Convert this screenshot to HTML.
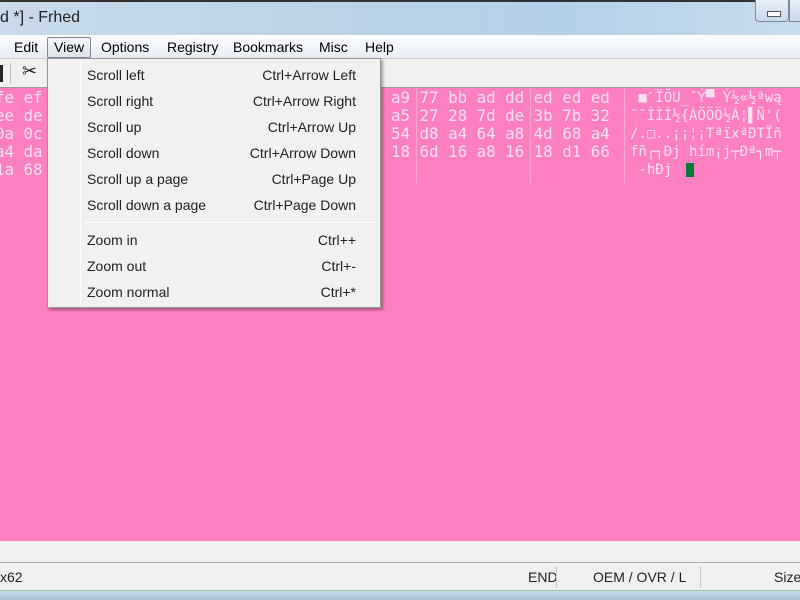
<!DOCTYPE html>
<html><head><meta charset="utf-8"><style>
*{margin:0;padding:0;box-sizing:border-box}
body{width:800px;height:600px;overflow:hidden;position:relative;background:#ff80c0;font-family:"Liberation Sans","DejaVu Sans",sans-serif}
.abs{position:absolute}
#title{left:0;top:0;width:800px;height:35px;background:linear-gradient(90deg,#c9dbea,#bcd3e6 40%,#b4d0e8 70%,#c8dcec);border-top:2px solid #333;}
#title span{position:absolute;left:0;top:7px;font-size:16px;color:#222}
#minb{left:755px;top:0;width:34px;height:22px;border:1px solid #7a8a9a;border-top:none;border-radius:0 0 4px 4px;background:linear-gradient(#e8f0f8,#c8d8e8)}
#minb:after{content:"";position:absolute;left:11px;top:11px;width:12px;height:4px;border:1px solid #555;background:#fff}
#maxb{left:789px;top:0;width:20px;height:22px;border:1px solid #7a8a9a;border-top:none;background:linear-gradient(#e8f0f8,#c8d8e8)}
#menu{left:0;top:35px;width:800px;height:24px;background:linear-gradient(#fbfcfe,#e8edf5);border-bottom:1px solid #c8ccd4}
#view{left:47px;top:37px;width:44px;height:21px;border:1px solid #7e8a98;border-radius:2px;background:linear-gradient(#f4f6f9,#dfe4ea)}
#tool{left:0;top:59px;width:800px;height:29px;background:#f0f0ee;border-bottom:1px solid #999}
.vl{position:absolute;top:88px;height:95px;width:1px;background:#f0a8cc}
.hex{position:absolute;font-family:"DejaVu Sans Mono","Liberation Mono",monospace;font-size:15.8px;color:#fbe0f0;line-height:18px;white-space:pre;top:89px}
#dd{left:47px;top:58px;width:334px;height:250px;background:#f1f1f1;border:1px solid #979797;box-shadow:2px 2px 3px rgba(0,0,0,.35)}
#dd .g{position:absolute;left:32px;top:2px;width:1px;height:244px;background:#e2e3e3;border-right:1px solid #fff}
.it{position:absolute;left:39px;font-size:14px;color:#222}
.sc{position:absolute;right:24px;font-size:14px;color:#222;text-align:right}
#sep{position:absolute;left:36px;top:163px;width:292px;height:1px;background:#e0e0e0;border-bottom:1px solid #fff}
#hs{left:0;top:541px;width:800px;height:22px;background:#f0f0f0;border-top:1px solid #e8e8e8;border-bottom:1px solid #b0b0b0}
#sb{left:0;top:563px;width:800px;height:27px;background:#f0f0ee}
#sb span{position:absolute;top:6px;font-size:14px;color:#222}
#bot{left:0;top:590px;width:800px;height:10px;background:linear-gradient(#c8dae8,#a9c2d6);border-top:1px solid #8ca}
</style></head><body>
<div id="title" class="abs"><span>d *] - Frhed</span></div>
<div id="minb" class="abs"></div><div id="maxb" class="abs"></div>
<div id="menu" class="abs"></div>
<div id="view" class="abs"></div>
<div class="abs" style="top:39px;left:0;width:800px;height:20px;font-size:14px">
<span class="abs" style="left:14px">Edit</span>
<span class="abs" style="left:54px">View</span>
<span class="abs" style="left:101px">Options</span>
<span class="abs" style="left:167px">Registry</span>
<span class="abs" style="left:233px">Bookmarks</span>
<span class="abs" style="left:319px">Misc</span>
<span class="abs" style="left:365px">Help</span>
</div>
<div id="tool" class="abs">
<div class="abs" style="left:0;top:6px;width:3px;height:17px;background:#222"></div>
<div class="abs" style="left:10px;top:4px;width:1px;height:20px;background:#bbb"></div>
<span class="abs" style="left:22px;top:2px;font-size:18px;color:#222">✂</span>
</div>
<div class="vl" style="left:416px"></div><div class="vl" style="left:530px"></div><div class="vl" style="left:624px"></div>
<div class="hex" style="left:-5px">fe ef
ee de
0a 0c
a4 da
1a 68</div>
<div class="hex" style="left:391px">a9 77 bb ad dd ed ed ed
a5 27 28 7d de 3b 7b 32
54 d8 a4 64 a8 4d 68 a4
18 6d 16 a8 16 18 d1 66</div>
<div class="hex" style="left:630px;font-size:14px"> ■ˋÏÕU_¯Ý▀ Ý½«½ªwą
¯¯ÌÌÌ½{ÀÖÖÖ½Á¦▌Ñ'(
/.□..¡¡¦¡Tªïxª̈ÐTÏñ
fñ┌┐Ðj hím¡j┬Ðª┐m┬
 -hÐj </div>
<div class="abs" style="left:686px;top:163px;width:8px;height:14px;background:#0a7a3a"></div>
<div id="dd" class="abs">
<div class="g"></div>
<span class="it" style="top:8px">Scroll left</span><span class="sc" style="top:8px">Ctrl+Arrow Left</span>
<span class="it" style="top:34px">Scroll right</span><span class="sc" style="top:34px">Ctrl+Arrow Right</span>
<span class="it" style="top:60px">Scroll up</span><span class="sc" style="top:60px">Ctrl+Arrow Up</span>
<span class="it" style="top:86px">Scroll down</span><span class="sc" style="top:86px">Ctrl+Arrow Down</span>
<span class="it" style="top:112px">Scroll up a page</span><span class="sc" style="top:112px">Ctrl+Page Up</span>
<span class="it" style="top:138px">Scroll down a page</span><span class="sc" style="top:138px">Ctrl+Page Down</span>
<div id="sep"></div>
<span class="it" style="top:173px">Zoom in</span><span class="sc" style="top:173px">Ctrl++</span>
<span class="it" style="top:199px">Zoom out</span><span class="sc" style="top:199px">Ctrl+-</span>
<span class="it" style="top:225px">Zoom normal</span><span class="sc" style="top:225px">Ctrl+*</span>
</div>
<div id="hs" class="abs"></div>
<div id="sb" class="abs">
<span style="left:0">x62</span>
<span style="left:528px">END</span>
<div class="abs" style="left:556px;top:3px;width:1px;height:22px;background:#ccc"></div>
<span style="left:593px">OEM / OVR / L</span>
<div class="abs" style="left:700px;top:3px;width:1px;height:22px;background:#ccc"></div>
<span style="left:774px">Size</span>
</div>
<div id="bot" class="abs"></div>
</body></html>
